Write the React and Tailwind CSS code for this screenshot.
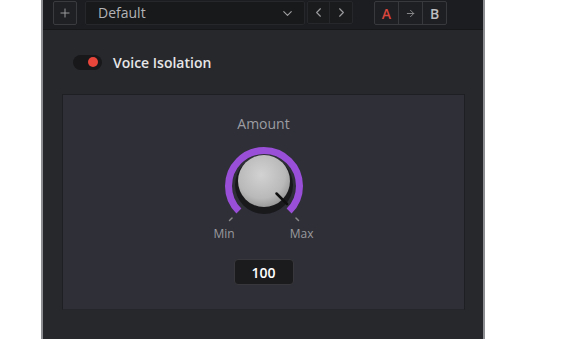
import React from 'react';
import { Plus, ChevronDown, ChevronLeft, ChevronRight, ArrowRight } from 'lucide-react';

const Knob = () => {
    return (
        <svg width="100" height="84" viewBox="0 0 100 84">
            <defs>
                <radialGradient id="knobFace" cx="45%" cy="38%" r="70%">
                    <stop offset="0%" stopColor="#d2d2d2" />
                    <stop offset="65%" stopColor="#b9b9b9" />
                    <stop offset="100%" stopColor="#8c8c8c" />
                </radialGradient>
            </defs>
            {/* purple value arc */}
            <path d="M 24.9 71.1 A 35.5 35.5 0 1 1 75.1 71.1" fill="none" stroke="#9a4fd8" strokeWidth="7" />
            {/* shadow under the knob */}
            <circle cx="50" cy="45" r="29" fill="#19191c" />
            <circle cx="50" cy="41" r="26" fill="url(#knobFace)" />
            {/* indicator */}
            <line x1="62.5" y1="53.5" x2="73" y2="64" stroke="#0f0f10" strokeWidth="2.5" strokeLinecap="round" />
            {/* min / max ticks */}
            <line x1="18" y1="78" x2="15.5" y2="80.5" stroke="#8a8a8a" strokeWidth="1.5" strokeLinecap="round" />
            <line x1="82" y1="78" x2="84.5" y2="80.5" stroke="#8a8a8a" strokeWidth="1.5" strokeLinecap="round" />
        </svg>
    );
};

const App = () => {
    return (
        <div className="w-[570px] h-[339px] bg-white flex overflow-hidden" style={{ fontFamily: '"Open Sans", "Liberation Sans", sans-serif' }}>
            <div className="w-[41px] shrink-0" />

            {/* Panel */}
            <div className="w-[444px] h-full flex flex-col bg-[#27282c] border-l-2 border-r-2 border-[#8d8e92]">
                {/* Top bar */}
                <div className="h-[30px] shrink-0 bg-[#1c1d20] border-b border-[#161719] flex items-start pt-[1px] pl-[10px]">
                    <div className="w-[24px] h-[24px] border border-[#3a3b3f] rounded-[2px] bg-[#1f2023] flex items-center justify-center">
                        <Plus size={14} strokeWidth={1.6} color="#a3a3a6" />
                    </div>
                    <div className="ml-[8px] w-[220px] h-[24px] bg-[#18191b] border border-[#26272a] rounded-[2px] flex items-center pl-[12px] pr-[9px]">
                        <span className="text-[14px] text-[#b3b3b6] leading-none">Default</span>
                        <ChevronDown size={15} strokeWidth={1.8} color="#a0a0a3" className="ml-auto" />
                    </div>
                    <div className="ml-[2px] h-[23px] flex bg-[#1a1b1d] border border-[#26272a] rounded-[2px]">
                        <div className="w-[22px] flex items-center justify-center border-r border-[#26272a]">
                            <ChevronLeft size={15} strokeWidth={1.8} color="#9c9c9f" />
                        </div>
                        <div className="w-[22px] flex items-center justify-center">
                            <ChevronRight size={15} strokeWidth={1.8} color="#9c9c9f" />
                        </div>
                    </div>
                    <div className="ml-[21px] h-[24px] flex border border-[#38393d] rounded-[2px] bg-[#1e1f22]">
                        <div className="w-[24px] flex items-center justify-center border-r border-[#38393d] text-[14px] font-semibold text-[#d8453c]">A</div>
                        <div className="w-[24px] flex items-center justify-center border-r border-[#38393d]">
                            <ArrowRight size={11} strokeWidth={2} color="#8f8f92" />
                        </div>
                        <div className="w-[23px] flex items-center justify-center text-[14px] font-semibold text-[#bdbdc0]">B</div>
                    </div>
                </div>

                {/* Content */}
                <div className="flex-1 flex flex-col px-[19px] pt-[22px]">
                    <div className="flex items-center h-[20px] ml-[11px]">
                        <div className="w-[29px] h-[15px] rounded-full bg-[#18181a] flex items-center justify-end pr-[4px]">
                            <div className="w-[10px] h-[10px] rounded-full bg-[#e8463a]" />
                        </div>
                        <span className="ml-[11px] text-[14px] font-semibold text-[#e6e6e8]">Voice Isolation</span>
                    </div>

                    <div className="mt-[22px] w-[403px] h-[216px] bg-[#2e2f37] border border-[#1e1f22] border-b-[#25262b] flex flex-col items-center pt-[19px]">
                        <span className="text-[14px] leading-[20px] text-[#9d9da2]">Amount</span>
                        <div className="mt-[6px]">
                            <Knob />
                        </div>
                        <div className="mt-[2px] w-[100px] flex justify-between text-[12px] leading-[16px] text-[#9a9a9e]">
                            <span>Min</span>
                            <span>Max</span>
                        </div>
                        <div className="mt-[17px] w-[60px] h-[26px] bg-[#1b1b1d] border border-[#38383c] rounded-[4px] flex items-center justify-center text-[14px] font-semibold text-white">
                            100
                        </div>
                    </div>
                </div>
            </div>

            <div className="flex-1" />
        </div>
    );
};

export default App;
